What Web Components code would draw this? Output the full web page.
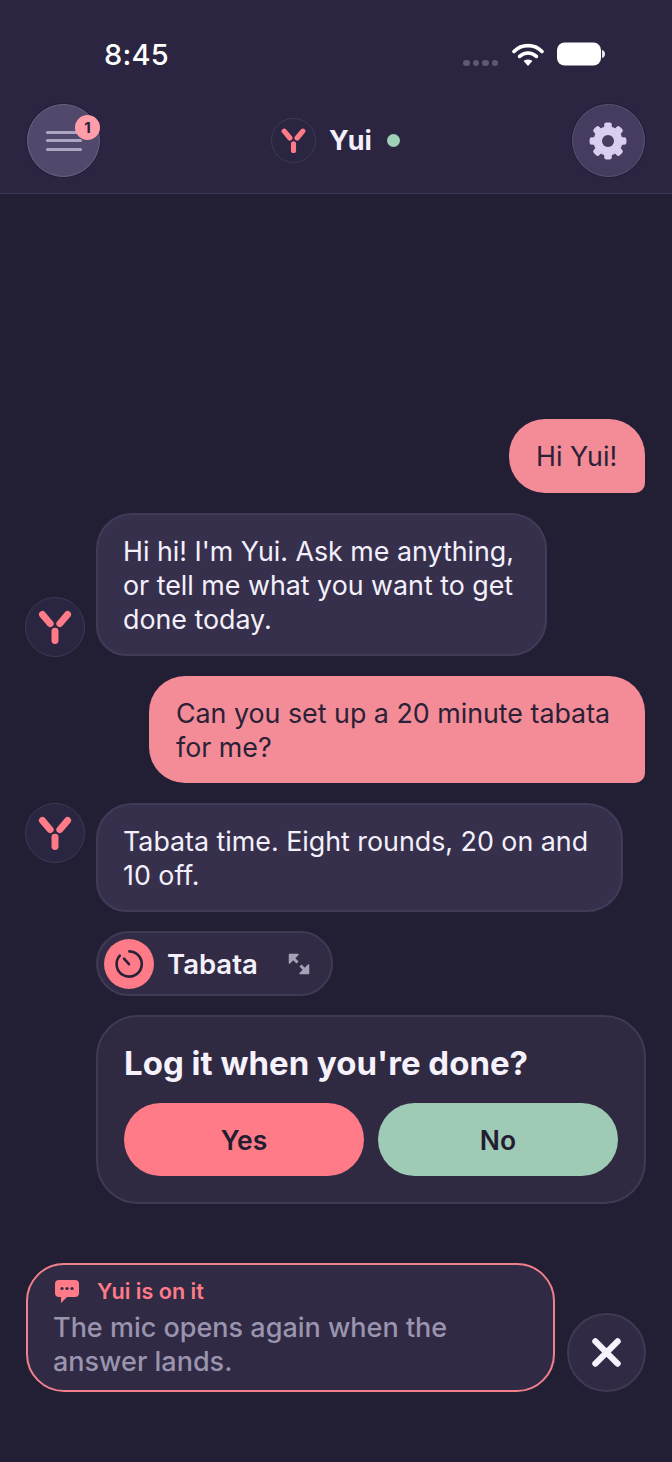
<!DOCTYPE html>
<html lang="en">
<head>
<meta charset="utf-8">
<title>Yui</title>
<style>
  html, body { margin: 0; padding: 0; background: #221e33; }
  body { font-family: Inter, "Liberation Sans", sans-serif; color: #f4f0fb; }
</style>
</head>
<body>
<yui-app>
  <status-bar slot="status"></status-bar>
  <app-header slot="header"></app-header>

  <chat-bubble from="user" style="width:136px">Hi Yui!</chat-bubble>
  <chat-row anchor="end">
    <chat-bubble from="yui" style="width:451px">Hi hi! I'm Yui. Ask me anything, or tell me what you want to get done today.</chat-bubble>
  </chat-row>
  <chat-bubble from="user" style="width:496px;padding-bottom:19px">Can you set up a 20 minute tabata for me?</chat-bubble>
  <chat-row anchor="start">
    <chat-bubble from="yui" style="width:527px">Tabata time. Eight rounds, 20 on and 10 off.</chat-bubble>
  </chat-row>
  <tool-chip>Tabata</tool-chip>
  <confirm-card>Log it when you're done?</confirm-card>

  <voice-status slot="footer" title="Yui is on it">The mic opens again when the answer lands.</voice-status>
</yui-app>

<script>
  const YUI_MARK = `
    <svg viewBox="0 0 60 60" width="100%" height="100%" aria-hidden="true">
      <g stroke="#ff7b88" stroke-width="7.2" stroke-linecap="round" fill="none">
        <path d="M17 17 L25 26.5"/>
        <path d="M43 17 L35 26.5"/>
        <path d="M30 34.5 L30 44"/>
      </g>
    </svg>`;

  class YuiApp extends HTMLElement {
    constructor() {
      super();
      this.attachShadow({ mode: 'open' });
      this.shadowRoot.innerHTML = `
        <style>
          :host {
            display: flex;
            flex-direction: column;
            width: 672px;
            height: 1462px;
            overflow: hidden;
            background: #221e33;
          }
          header {
            background: #2b2541;
            border-bottom: 1px solid #3a3450;
            height: 193px;
            flex: none;
          }
          main {
            flex: 1;
            display: flex;
            flex-direction: column;
            justify-content: flex-end;
            gap: 20px;
            padding: 0 26px 59px 26px;
          }
          footer {
            flex: none;
            padding: 0 26px 70px 26px;
          }
        </style>
        <header><slot name="status"></slot><slot name="header"></slot></header>
        <main><slot></slot></main>
        <footer><slot name="footer"></slot></footer>
      `;
    }
  }

  class StatusBar extends HTMLElement {
    constructor() {
      super();
      this.attachShadow({ mode: 'open' });
      this.shadowRoot.innerHTML = `
        <style>
          :host {
            display: flex;
            align-items: center;
            height: 104px;
            box-sizing: border-box;
            padding: 4px 67px 0 104px;
            color: #fff;
          }
          .time {
            font-size: 29px;
            font-weight: 500;
            letter-spacing: 0.2px;
            flex: 1;
          }
          .dots { display: flex; gap: 3px; margin: 18px 14px 0 0; }
          .dots i { width: 6.5px; height: 6.5px; border-radius: 50%; background: #5f5972; }
          svg { display: block; }
          .wifi { margin: 0 13px 0 0; }
        </style>
        <span class="time">8:45</span>
        <span class="dots"><i></i><i></i><i></i><i></i></span>
        <svg class="wifi" width="32" height="25" viewBox="0 0 32 25">
          <g fill="none" stroke="#fff" stroke-width="3.6" stroke-linecap="round">
            <path d="M2 9.5 C9.5 1.6 22.5 1.6 30 9.5"/>
            <path d="M7.6 14.4 C12.4 9.8 19.6 9.8 24.4 14.4"/>
          </g>
          <path d="M11.6 19 C14 17 18 17 20.4 19 L16 24 Z" fill="#fff"/>
        </svg>
        <svg width="48" height="24" viewBox="0 0 48 24">
          <rect x="0" y="0.5" width="44" height="23" rx="7.5" fill="#fff"/>
          <path d="M45 8 C47 8.6 48 10 48 12 C48 14 47 15.4 45 16 Z" fill="#e8e6ee"/>
        </svg>
      `;
    }
  }

  class RoundButton extends HTMLElement {
    constructor() {
      super();
      this.attachShadow({ mode: 'open' });
      this.shadowRoot.innerHTML = `
        <style>
          :host {
            display: flex;
            align-items: center;
            justify-content: center;
            position: relative;
            flex: none;
            box-sizing: border-box;
            width: 73px;
            height: 73px;
            border-radius: 50%;
            background: var(--bg, #453c5f);
            border: 1px solid var(--line, #5b5375);
            box-shadow: 0 0 0 1px #231e35;
          }
        </style>
        <slot></slot>
      `;
    }
  }

  class AppHeader extends HTMLElement {
    constructor() {
      super();
      this.attachShadow({ mode: 'open' });
      let teeth = '';
      for (let i = 0; i < 8; i++) {
        teeth += `<rect x="15.2" y="0.6" width="7.6" height="9" rx="2.2" transform="rotate(${i * 45} 19 19)"/>`;
      }
      this.shadowRoot.innerHTML = `
        <style>
          :host {
            display: flex;
            align-items: center;
            justify-content: space-between;
            padding: 0 27px;
          }
          .menu { --bg: #51496b; --line: #6b6385; }
          .badge {
            position: absolute;
            top: 10px;
            right: -1px;
            width: 25px;
            height: 25px;
            border-radius: 50%;
            background: #ff9dab;
            color: #2a2138;
            font-size: 15px;
            font-weight: 700;
            display: flex;
            align-items: center;
            justify-content: center;
          }
          .lines { display: flex; flex-direction: column; gap: 5.5px; width: 36px; }
          .lines i { height: 3px; border-radius: 2px; background: #aca5c2; }
          .who {
            display: flex;
            align-items: center;
            margin-left: -1px;
            font-size: 27px;
            font-weight: 700;
            color: #f4f0fb;
          }
          .who yui-avatar { --size: 45px; margin-right: 13px; }
          .dot {
            width: 13px;
            height: 13px;
            border-radius: 50%;
            background: #9fd0b8;
            margin-left: 15px;
          }
          svg { display: block; }
        </style>
        <round-button class="menu">
          <span class="lines"><i></i><i></i><i></i></span>
          <span class="badge">1</span>
        </round-button>
        <div class="who"><yui-avatar></yui-avatar><span>Yui</span><span class="dot"></span></div>
        <round-button>
          <svg width="38" height="38" viewBox="0 0 38 38">
            <g fill="#d9cdf0">${teeth}<circle cx="19" cy="19" r="14.5"/></g>
            <circle cx="19" cy="19" r="6" fill="#453c5f"/>
          </svg>
        </round-button>
      `;
    }
  }

  class YuiAvatar extends HTMLElement {
    constructor() {
      super();
      this.attachShadow({ mode: 'open' });
      this.shadowRoot.innerHTML = `
        <style>
          :host {
            display: block;
            flex: none;
            box-sizing: border-box;
            width: var(--size, 60px);
            height: var(--size, 60px);
            border-radius: 50%;
            background: #2a2540;
            border: 1px solid #3f3954;
          }
          svg { display: block; }
        </style>
        ${YUI_MARK}
      `;
    }
  }

  class ChatBubble extends HTMLElement {
    constructor() {
      super();
      this.attachShadow({ mode: 'open' });
      this.shadowRoot.innerHTML = `
        <style>
          :host {
            display: block;
            box-sizing: border-box;
            font-size: 26.8px;
            line-height: 34px;
            padding: 20px 27px;
            border-radius: 36px;
          }
          :host([from="user"]) {
            align-self: flex-end;
            margin-right: 1px;
            background: #f38c96;
            color: #2a2138;
            border-bottom-right-radius: 10px;
          }
          :host([from="yui"]) {
            background: #37304d;
            border: 2px solid #423b58;
            padding: 19px 26px 18px 25px;
            color: #f4f0fb;
            border-bottom-left-radius: 30px;
          }
        </style>
        <slot></slot>
      `;
    }
  }

  class ChatRow extends HTMLElement {
    constructor() {
      super();
      this.attachShadow({ mode: 'open' });
      this.shadowRoot.innerHTML = `
        <style>
          :host { display: flex; gap: 11px; align-items: flex-start; margin-left: -1px; }
          :host([anchor="end"]) { align-items: flex-end; }
          :host([anchor="end"]) yui-avatar { margin-bottom: -1px; }
        </style>
        <yui-avatar></yui-avatar>
        <slot></slot>
      `;
    }
  }

  class ToolChip extends HTMLElement {
    constructor() {
      super();
      this.attachShadow({ mode: 'open' });
      this.shadowRoot.innerHTML = `
        <style>
          :host {
            display: flex;
            align-items: center;
            align-self: flex-start;
            box-sizing: border-box;
            width: 237px;
            height: 65px;
            margin: -1px 0 0 70px;
            padding-left: 6px;
            border-radius: 33px;
            background: #312b45;
            border: 2px solid #403a55;
            font-size: 27.5px;
            font-weight: 600;
          }
          .clock {
            width: 50px;
            height: 50px;
            border-radius: 50%;
            background: #ff7b88;
            display: flex;
            align-items: center;
            justify-content: center;
            margin-right: 13px;
          }
          .grow { margin-left: 29px; display: block; }
          svg { display: block; }
        </style>
        <span class="clock">
          <svg width="32" height="32" viewBox="0 0 32 32" fill="none" stroke="#2a2138" stroke-width="2.6" stroke-linecap="round">
            <path d="M16.4 3.4 A12.6 12.6 0 1 1 6.8 7.6"/>
            <path d="M11 10.6 L16 16.2"/>
          </svg>
        </span>
        <slot></slot>
        <svg class="grow" width="24" height="24" viewBox="0 0 24 24" fill="none" stroke="#a7a1b8" stroke-width="3">
          <path d="M2.5 11 V2.5 H11 Z" fill="#a7a1b8" stroke-width="1.5" stroke-linejoin="round"/>
          <path d="M21.5 13 V21.5 H13 Z" fill="#a7a1b8" stroke-width="1.5" stroke-linejoin="round"/>
          <path d="M6 6 L10.5 10.5 M18 18 L13.5 13.5"/>
        </svg>
      `;
    }
  }

  class ConfirmCard extends HTMLElement {
    constructor() {
      super();
      this.attachShadow({ mode: 'open' });
      this.shadowRoot.innerHTML = `
        <style>
          :host {
            display: block;
            box-sizing: border-box;
            margin: -1px 0 0 70px;
            padding: 26px 26px 26px 26px;
            height: 189px;
            border-radius: 42px;
            background: #2f2942;
            border: 2px solid #403a55;
          }
          .title { font-size: 33px; font-weight: 700; line-height: 40px; color: #f6f2fc; }
          .actions { display: grid; grid-template-columns: 1fr 1fr; gap: 14px; margin-top: 20px; }
          .btn {
            height: 73px;
            border-radius: 37px;
            display: flex;
            align-items: center;
            justify-content: center;
            font-size: 26.5px;
            font-weight: 600;
            color: #231d31;
          }
          .yes { background: #ff7b88; }
          .no { background: #9fcab5; }
        </style>
        <div class="title"><slot></slot></div>
        <div class="actions"><span class="btn yes">Yes</span><span class="btn no">No</span></div>
      `;
    }
  }

  class VoiceStatus extends HTMLElement {
    constructor() {
      super();
      this.attachShadow({ mode: 'open' });
      const title = this.getAttribute('title');
      this.removeAttribute('title');
      this.shadowRoot.innerHTML = `
        <style>
          :host { display: flex; align-items: flex-end; gap: 12px; }
          .panel {
            box-sizing: border-box;
            width: 529px;
            height: 129px;
            border-radius: 38px;
            background: #302a44;
            border: 2px solid #f0808c;
            padding: 9px 26px 0 25px;
          }
          .head {
            display: flex;
            align-items: center;
            gap: 17px;
            margin-left: 1px;
            color: #ff7b88;
            font-size: 21.6px;
            font-weight: 600;
            height: 34px;
          }
          .text { font-size: 27px; line-height: 34px; color: #9a94ae; font-weight: 500; margin-top: 3px; }
          .close {
            width: 79px;
            height: 79px;
            flex: none;
            box-sizing: border-box;
            border-radius: 50%;
            background: #302a44;
            border: 2px solid #3f3954;
            display: flex;
            align-items: center;
            justify-content: center;
          }
          svg { display: block; }
        </style>
        <div class="panel">
          <div class="head">
            <svg width="26" height="25" viewBox="0 0 26 25">
              <path d="M5 1 H21 A4 4 0 0 1 25 5 V14 A4 4 0 0 1 21 18 H13 L7 24 V18 H5 A4 4 0 0 1 1 14 V5 A4 4 0 0 1 5 1 Z" fill="#ff7b88"/>
              <g fill="#302a44"><circle cx="8" cy="9.5" r="1.6"/><circle cx="13" cy="9.5" r="1.6"/><circle cx="18" cy="9.5" r="1.6"/></g>
            </svg>
            <span>${title}</span>
          </div>
          <div class="text"><slot></slot></div>
        </div>
        <div class="close">
          <svg width="29" height="29" viewBox="0 0 30 30" stroke="#f7f3fd" stroke-width="6.5" stroke-linecap="round">
            <path d="M3.5 3.5 L26.5 26.5 M26.5 3.5 L3.5 26.5"/>
          </svg>
        </div>
      `;
    }
  }

  customElements.define('yui-avatar', YuiAvatar);
  customElements.define('round-button', RoundButton);
  customElements.define('status-bar', StatusBar);
  customElements.define('app-header', AppHeader);
  customElements.define('chat-bubble', ChatBubble);
  customElements.define('chat-row', ChatRow);
  customElements.define('tool-chip', ToolChip);
  customElements.define('confirm-card', ConfirmCard);
  customElements.define('voice-status', VoiceStatus);
  customElements.define('yui-app', YuiApp);
</script>
</body>
</html>
